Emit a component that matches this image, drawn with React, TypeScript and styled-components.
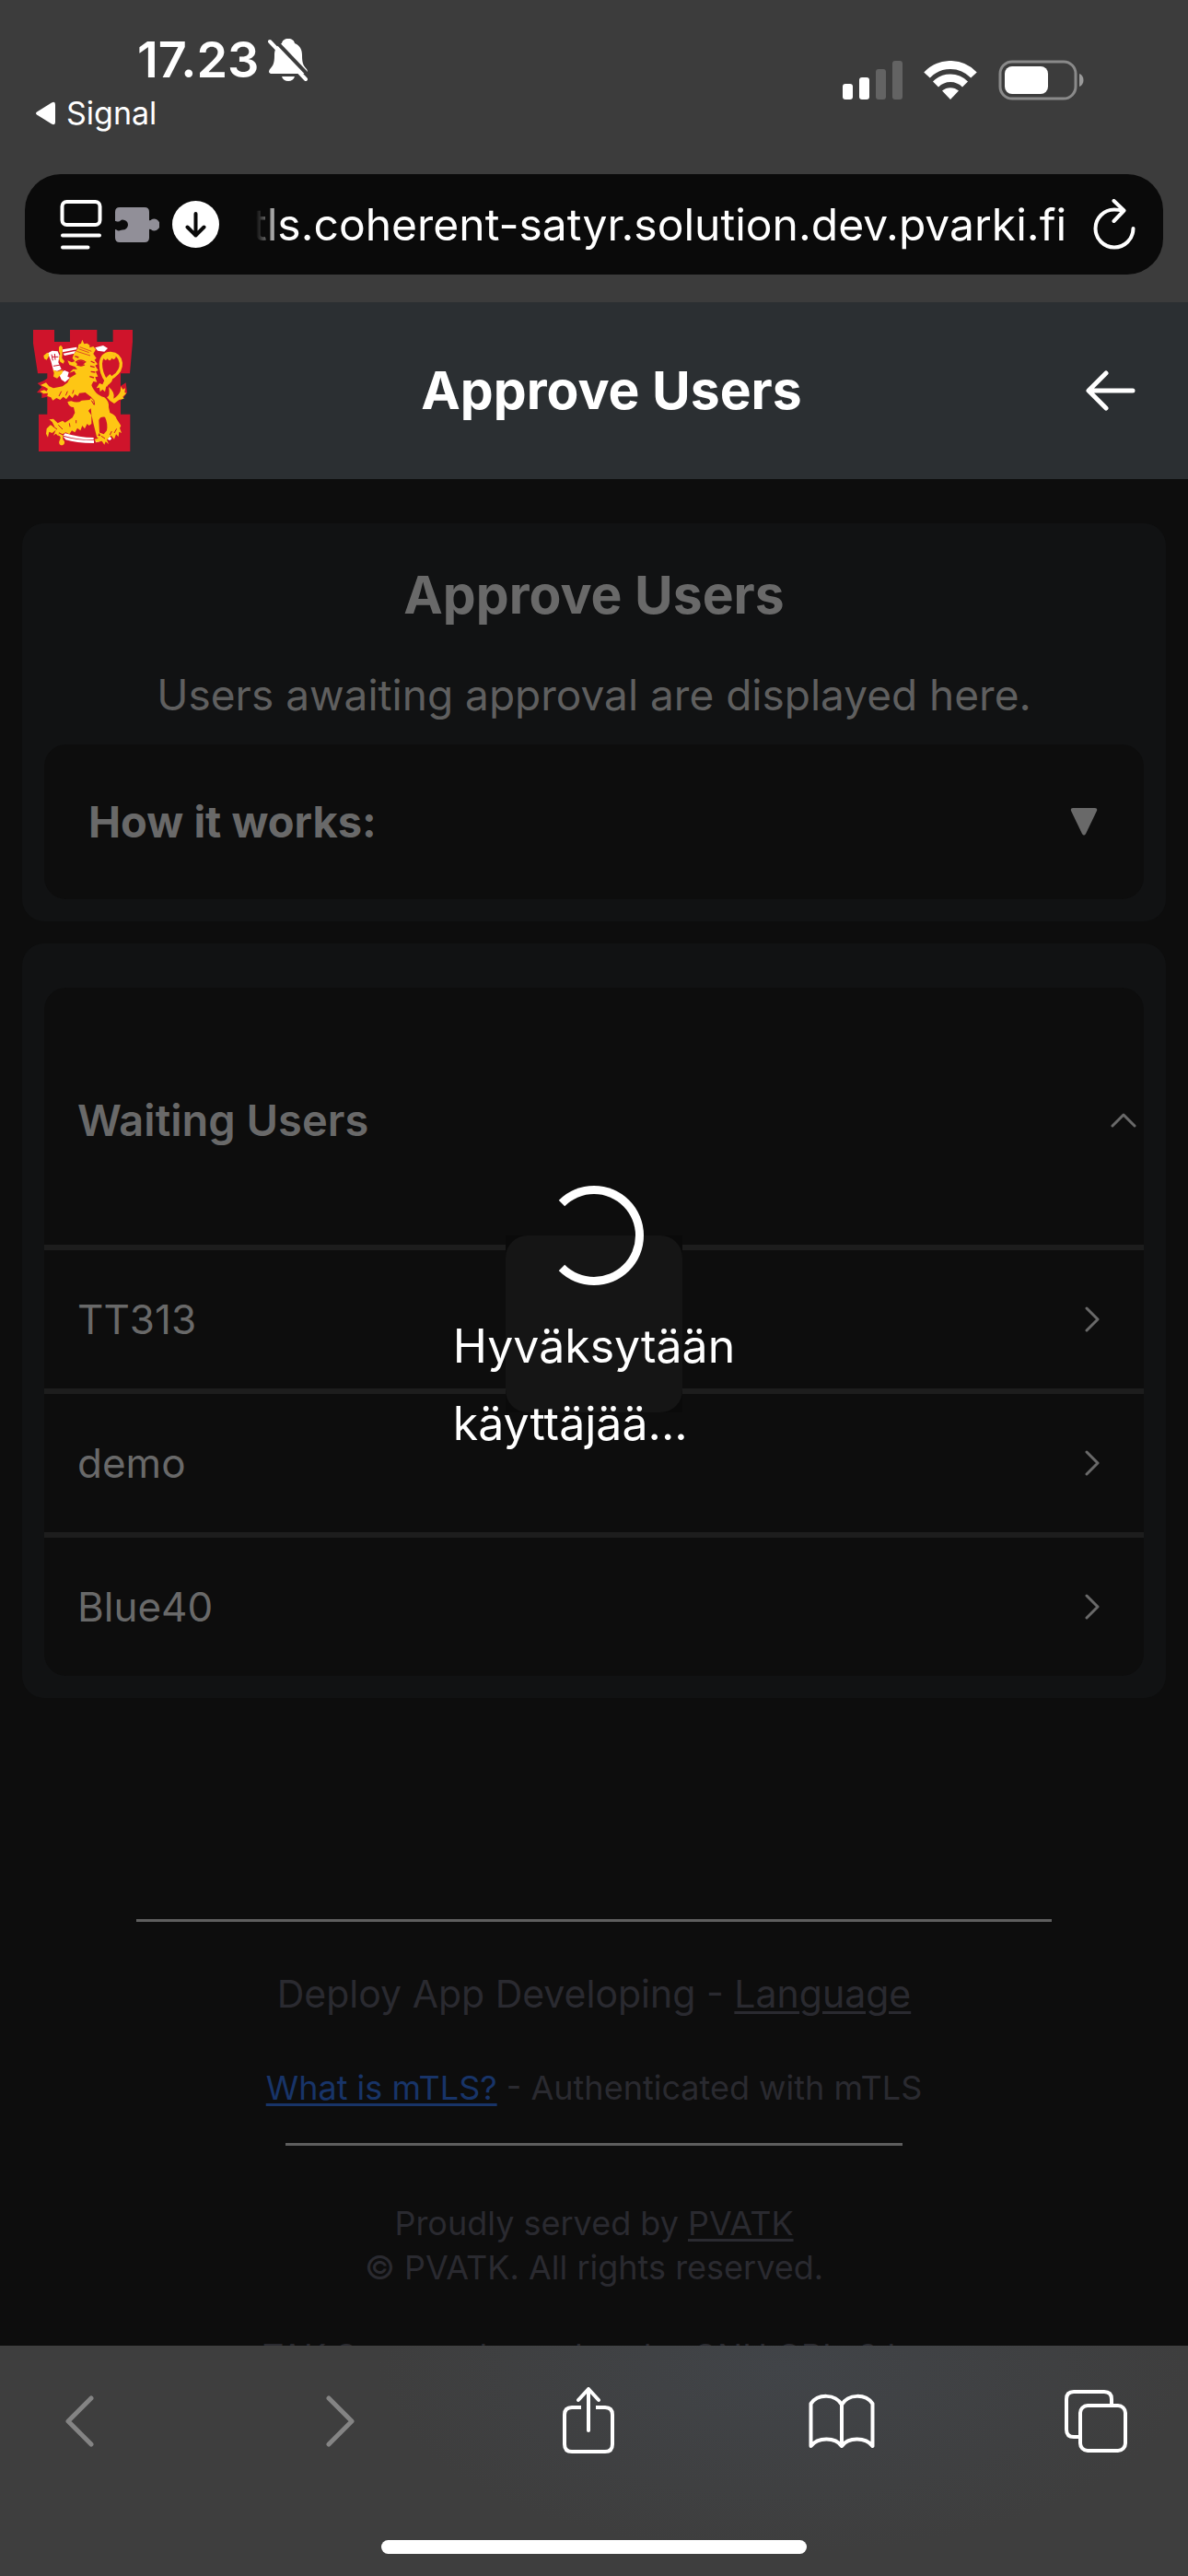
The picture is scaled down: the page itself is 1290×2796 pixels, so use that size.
import React from "react";
import styled, { createGlobalStyle } from "styled-components";

const GlobalStyle = createGlobalStyle`
  *, *::before, *::after { box-sizing: border-box; }
  html, body { margin: 0; background: #0d0d0d; }
  body {
    font-family: Inter, "Liberation Sans", sans-serif;
    color: #696969;
    -webkit-font-smoothing: antialiased;
  }
  h1, h2, p { margin: 0; }
  button { font: inherit; color: inherit; background: none; border: 0; padding: 0; cursor: pointer; }
  svg { display: block; flex: none; }
`;

const Screen = styled.div`
  display: flex;
  flex-direction: column;
  height: 100vh;
  overflow: hidden;
`;

/* ---------- Browser chrome ---------- */

const Chrome = styled.header`
  flex: none;
  background: #3c3c3c;
  padding-bottom: 30px;
`;

const StatusBar = styled.div`
  display: flex;
  justify-content: space-between;
  align-items: flex-start;
  height: 189px;
  padding: 33px 112px 0 38px;
  color: #fff;
`;

const StatusLeft = styled.div`
  display: flex;
  flex-direction: column;
`;

const Clock = styled.div`
  display: flex;
  align-items: center;
  gap: 10px;
  padding-left: 111px;
  font-size: 54px;
  line-height: 64px;
  font-weight: 600;
`;

const BackToApp = styled.button`
  display: flex;
  align-items: center;
  gap: 12px;
  margin-top: 4px;
  font-size: 34px;
  line-height: 44px;
`;

const StatusRight = styled.div`
  display: flex;
  align-items: center;
  gap: 23px;
  margin-top: 32px;
`;

const AddressBar = styled.div`
  display: flex;
  align-items: center;
  height: 109px;
  margin: 0 27px;
  padding: 0 30px 0 38px;
  border-radius: 39px;
  background: #0a0a0a;
  color: #fff;
`;

const AddressTools = styled.div`
  display: flex;
  align-items: center;
  gap: 14px;
`;

const AddressInput = styled.input`
  flex: 1;
  min-width: 0;
  margin: 0 30px 0 36px;
  padding: 0;
  border: 0;
  outline: 0;
  background: none;
  color: #fff;
  font: inherit;
  font-size: 48px;
  line-height: 64px;
  text-align: right;
  mask-image: linear-gradient(to right, transparent 4px, #000 32px);
`;

const Toolbar = styled.nav`
  flex: none;
  height: 250px;
  padding: 40px 58px 24px 45px;
  display: flex;
  flex-direction: column;
  justify-content: space-between;
  background:
    radial-gradient(ellipse 440px 200px at 66% 10%, #414448 0%, rgba(65, 68, 72, 0) 100%),
    #3e3e3e;
`;

const ToolbarButtons = styled.div`
  display: flex;
  justify-content: space-between;
  width: 100%;
`;

const ToolButton = styled.button<{ $muted?: boolean }>`
  display: flex;
  align-items: center;
  justify-content: center;
  width: 84px;
  height: 84px;
  color: ${(p) => (p.$muted ? "#848484" : "#fff")};
`;

const HomeIndicator = styled.div`
  width: 462px;
  height: 15px;
  margin-left: calc(50vw - 276px);
  border-radius: 8px;
  background: #fff;
`;

/* ---------- Page ---------- */

const Page = styled.div`
  position: relative;
  flex: 1;
  min-height: 0;
  overflow: hidden;
  background: #0d0d0d;
`;

const AppBar = styled.div`
  display: grid;
  grid-template-columns: 132px 1fr 94px;
  align-items: center;
  height: 192px;
  padding: 0 36px;
  background: #2b2f32;
  color: #fff;
`;

const Title = styled.h1`
  font-size: 57px;
  line-height: 72px;
  font-weight: 700;
  text-align: center;
`;

const BackButton = styled.button`
  justify-self: end;
  padding-right: 21px;
`;

const Content = styled.main`
  display: flex;
  flex-direction: column;
  gap: 24px;
  padding: 48px 24px 0;
`;

const Card = styled.section<{ $top: number }>`
  padding: ${(p) => p.$top}px 24px 24px;
  border-radius: 24px;
  background: #111213;
`;

const CardTitle = styled.h2`
  font-size: 57px;
  line-height: 72px;
  font-weight: 700;
  text-align: center;
`;

const CardText = styled.p`
  margin: 36px 0 18px;
  font-size: 46px;
  line-height: 72px;
  color: #5f5f5f;
  text-align: center;
`;

const Disclosure = styled.button`
  display: flex;
  align-items: center;
  justify-content: space-between;
  width: 100%;
  height: 168px;
  padding: 0 50px 0 48px;
  border-radius: 24px;
  background: #0d0d0d;
  font-size: 47px;
  line-height: 72px;
  font-weight: 700;
`;

const UserPanel = styled.div`
  border-radius: 24px;
  background: #0d0d0d;
`;

const PanelHeader = styled.button`
  display: flex;
  align-items: center;
  justify-content: space-between;
  width: 100%;
  height: 279px;
  padding: 8px 8px 0 36px;
  font-size: 47px;
  line-height: 72px;
  font-weight: 600;
`;

const UserList = styled.ul`
  margin: 0;
  padding: 0;
  list-style: none;
`;

const UserItem = styled.li`
  border-top: 6px solid #1d1d1d;
`;

const UserButton = styled.button`
  display: flex;
  align-items: center;
  justify-content: space-between;
  width: 100%;
  height: 150px;
  padding: 0 48px 0 36px;
  font-size: 44px;
  line-height: 72px;
`;

const Footer = styled.footer`
  display: flex;
  flex-direction: column;
  align-items: center;
  padding-top: 240px;
  color: #2a2a30;
  font-size: 36px;
  line-height: 48px;
  text-align: center;

  a {
    color: inherit;
    text-decoration-thickness: 3px;
    text-underline-offset: 4px;
  }
`;

const Rule = styled.hr<{ $width: string }>`
  width: ${(p) => p.$width};
  height: 3px;
  margin: 0;
  border: 0;
  background: #5e5e5e;
`;

const DeployLine = styled.p`
  padding: 46px 0;
  font-size: 41px;
  line-height: 64px;
`;

const FooterText = styled.p`
  padding-bottom: 36px;
`;

const Legal = styled.div`
  padding: 60px 0 48px;
`;

const InfoLink = styled.a`
  && { color: #183468; }
`;

/* ---------- Loading overlay ---------- */

const Overlay = styled.div`
  position: absolute;
  inset: 0;
  display: flex;
  align-items: center;
  justify-content: center;
`;

const LoaderCorners = styled.div`
  width: 192px;
  height: 192px;
  background: #0a0a0a;
`;

const LoaderBox = styled.div`
  display: flex;
  flex-direction: column;
  align-items: center;
  justify-content: center;
  gap: 24px;
  width: 192px;
  height: 192px;
  border-radius: 24px;
  background: #151515;
  color: #fff;
`;

const Spinner = styled.div`
  flex: none;
  width: 108px;
  height: 108px;
  border: 9px solid #fff;
  border-left-color: transparent;
  border-radius: 50%;
`;

const LoaderText = styled.p`
  flex: none;
  font-size: 50px;
  line-height: 84px;
  white-space: nowrap;
`;

/* ---------- Icons ---------- */

const BellOff = () => (
  <svg width="44" height="48" viewBox="0 0 44 48" fill="none">
    <path
      d="M22 1c-4 0-6.500 2-7 5C9 8.500 7 13 7 19c0 9-1.500 11-4.500 14.500C0 36.500 1 39 4 39h36c3 0 4-2.500 1.500-5.500C38.500 30 37 28 37 19c0-6-2-10.500-8-13-.500-3-3-5-7-5z"
      fill="#fff"
    />
    <path d="M15 42h14c-1 3.500-3.500 5-7 5s-6-1.500-7-5z" fill="#fff" />
    <path d="M5 0L46 43" stroke="#3c3c3c" strokeWidth="4" />
    <path d="M2 4L41 45" stroke="#fff" strokeWidth="4" strokeLinecap="round" />
  </svg>
);

const BackTriangle = () => (
  <svg width="22" height="26" viewBox="0 0 22 26">
    <path d="M2 11.500L18 1.500q4-2 4 2v19q0 4-4 2L2 14.500q-2-1.500 0-3z" fill="#fff" />
  </svg>
);

const SignalBars = () => (
  <svg width="65" height="42" viewBox="0 0 65 42">
    <rect x="0" y="25" width="11" height="17" rx="3" fill="#fff" />
    <rect x="18" y="18" width="11" height="24" rx="3" fill="#fff" />
    <rect x="36" y="9" width="11" height="33" rx="3" fill="#636363" />
    <rect x="54" y="0" width="11" height="42" rx="3" fill="#636363" />
  </svg>
);

const Wifi = () => (
  <svg width="58" height="42" viewBox="0 0 58 42" fill="none" stroke="#fff">
    <path d="M3.500 15.500C17.500 .800 40.500 .800 54.500 15.500" strokeWidth="9" />
    <path d="M13 25.500c9-9 23-9 32 0" strokeWidth="8.500" />
    <path d="M29 42l-9-9.500c5-4.500 13-4.500 18 0z" fill="#fff" stroke="none" />
  </svg>
);

const Battery = () => (
  <svg width="94" height="44" viewBox="0 0 94 44">
    <rect x="2" y="2" width="82" height="40" rx="13" fill="none" stroke="#8a8a8a" strokeWidth="3" />
    <rect x="7" y="7" width="47" height="30" rx="8" fill="#fff" />
    <path d="M88 15c6 2 6 12 0 14z" fill="#9a9a9a" />
  </svg>
);

const ReaderIcon = () => (
  <svg width="46" height="56" viewBox="0 0 46 56" fill="none" stroke="#fff" strokeWidth="4" strokeLinecap="round">
    <rect x="2.500" y="3" width="41" height="25" rx="5" />
    <path d="M3 39.500h40M3 52.500h27.500" />
  </svg>
);

const PuzzleIcon = () => (
  <svg width="48" height="40" viewBox="0 0 48 40">
    <path
      d="M5 1h27q5 0 5 5v9c2 1 2-1.500 5.500-1.500a6 6.500 0 010 13C39 26.500 39 24 37 25v9q0 5-5 5H5q-5 0-5-5v-9c2 0 2 1.500 4 1.500 1.500 0 2-1 4-1a6 5.500 0 000-11c-2 0-2.500 2-4.500 2S1 16 0 16V6q0-5 5-5z"
      fill="#918f98"
    />
  </svg>
);

const DownloadIcon = () => (
  <svg width="51" height="51" viewBox="0 0 51 51" fill="none">
    <circle cx="25.500" cy="25.500" r="25.500" fill="#fff" />
    <path d="M25.500 14v23M16.500 28.500l9 9 9-9" stroke="#0a0a0a" strokeWidth="4" strokeLinecap="round" strokeLinejoin="round" />
  </svg>
);

const ReloadIcon = () => (
  <svg width="46" height="56" viewBox="0 0 46 56" fill="none" stroke="#fff" strokeWidth="4" strokeLinecap="round" strokeLinejoin="round">
    <path d="M43.500 32a20.500 20.500 0 11-20.500-20.500c4 0 7 .500 9 1.500" />
    <path d="M22.500 2l11 10.500L22.500 24" />
  </svg>
);

const ArrowLeft = () => (
  <svg width="54" height="44" viewBox="0 0 54 44" fill="none" stroke="#fff" strokeWidth="5" strokeLinecap="round" strokeLinejoin="round">
    <path d="M51 22H4M22 3L3 22l19 19" />
  </svg>
);

const TriangleDown = () => (
  <svg width="30" height="30" viewBox="0 0 30 30">
    <path d="M3 0h24q3 0 2 3L17 28q-2 3-4 0L1 3q-1-3 2-3z" fill="#696969" />
  </svg>
);

const ChevronUp = () => (
  <svg width="28" height="16" viewBox="0 0 28 16" fill="none" stroke="#696969" strokeWidth="3" strokeLinecap="round" strokeLinejoin="round">
    <path d="M2 14L14 2l12 12" />
  </svg>
);

const ChevronRight = () => (
  <svg width="16" height="28" viewBox="0 0 16 28" fill="none" stroke="#696969" strokeWidth="3" strokeLinecap="round" strokeLinejoin="round">
    <path d="M2 2l12 12L2 26" />
  </svg>
);

const NavChevron = ({ forward }: { forward?: boolean }) => (
  <svg width="50" height="56" viewBox="0 0 50 56" fill="none" stroke="currentColor" strokeWidth="5" strokeLinecap="round" strokeLinejoin="round">
    <path d={forward ? "M19 3l25 25L19 53" : "M37 3L12 28l25 25"} />
  </svg>
);

const ShareIcon = () => (
  <svg width="58" height="74" viewBox="0 0 58 74" fill="none" stroke="currentColor" strokeWidth="4" strokeLinecap="round" strokeLinejoin="round">
    <path d="M21 22H11q-8 0-8 8v32q0 8 8 8h36q8 0 8-8V30q0-8-8-8H37" strokeLinecap="butt" />
    <path d="M29 47V3M18 14L29 2l11 12" />
  </svg>
);

const BookIcon = () => (
  <svg width="72" height="60" viewBox="0 0 72 60" fill="none" stroke="currentColor" strokeWidth="4" strokeLinecap="round" strokeLinejoin="round">
    <path d="M36 57V12M36 12C29 0 10 0 2.500 11v46C10 47 29 47 36 57 43 47 62 47 69.500 57V11C62 0 43 0 36 12z" />
  </svg>
);

const TabsIcon = () => (
  <svg width="68" height="68" viewBox="0 0 68 68" fill="none" stroke="currentColor" strokeWidth="4">
    <path d="M51 17V10q0-8-8-8H10q-8 0-8 8v33q0 8 8 8h7" />
    <rect x="17" y="17" width="49" height="49" rx="8" />
  </svg>
);

const YELLOW = "#fec614";
const RED = "#cf142b";

const Crest = () => (
  <svg width="110" height="136" viewBox="0 0 330 408" role="img" aria-label="Finnish Defence Forces">
    <path d="M0 6H69V45H120V6H208V45H260V6H324V45L315 148H285V281H316V402H18V281H46V148H15L0 50Z" fill={RED} />
    {/* red edging that lets paws stand out past the tower */}
    <path d="M52 160L34 172 14 180 28 192 12 210 28 212 28 228 46 224 60 240 150 220V165ZM284 190L302 178 306 210 292 230 280 240Z" fill={RED} />
    {/* scabbard and raised sword */}
    <g fill="#fff">
      <path d="M96 70L142 62V70L96 79ZM98 83L138 75 134 83 102 90Z" />
      <path d="M202 64L228 57 243 66 232 77 210 74Z" />
      <path d="M48 82L62 74 80 76 86 90 82 112 92 134 78 140 66 138 58 108Z" />
      <path d="M84 150L102 138 116 144 112 158 120 162 104 176 92 168Z" />
      <path d="M104 343Q150 357 197 357V364Q144 364 98 350ZM98 353Q150 367 198 366V375Q138 375 106 364Z" />
      <path d="M203 366L216 358 220 368 204 373ZM242 362L248 352 256 360 250 366Z" />
    </g>
    <path d="M62 94h20M60 86l4 20M70 84l2 20M66 124l24-4" stroke={RED} strokeWidth="3" fill="none" />
    <g fill={YELLOW}>
      {/* hilt and elbow guard */}
      <path d="M84 62L90 56 96 64 94 98 102 108 98 116 88 110 84 100 88 84 84 76ZM34 90L46 80 52 84 50 94 44 104 36 100Z" />
      <path d="M64 136L78 142 92 138 98 136 94 148 84 158 78 164 66 158 68 146Z" />
      {/* crown, head, mane and trunk */}
      <path d="M132 86L146 66 148 54 156 50 160 38 166 52 176 50 184 56 184 64 196 60 204 70 196 84 206 98 200 104 210 118 202 122 212 138 204 142 211 158 202 160 208 176 196 174 190 186C198 206 210 220 232 226Q248 238 246 258L250 276Q268 282 272 296L286 318 282 326 288 342 280 338 278 354 270 346 264 362 254 350 240 364 246 378 236 370 232 380 224 368 206 372 200 362 212 360 206 350 220 352 214 340 230 346 240 334Q244 310 234 290 218 288 214 300L216 340 208 358 196 310 190 282 188 262Q184 264 180 270L190 284 190 312 182 318 176 312 168 328 160 318 154 334 144 326 136 340 126 334 118 346 106 340 96 346 84 340 82 352 74 344 66 350 74 332 62 342 52 338 48 356 42 344 44 328 56 316 70 322 62 306 52 298 66 296 80 310 96 302 104 308 116 300 128 292 136 276 132 258Q116 258 112 240L124 238Q146 246 158 236L184 234 190 226 170 210 150 212 146 222 136 216 128 228 118 218 108 232 98 224 88 234 76 228 64 236 58 226 46 222 48 212 34 214 22 206 36 202 44 206 48 198 38 192 24 186 42 178 52 190 66 196 96 190 112 178 120 162 140 150 134 140 118 146 130 134 144 134 136 126 118 120 112 106 126 112 136 108 128 98Z" />
      {/* foot tip below the sabre */}
      <path d="M82 342L98 350Q94 364 102 368 104 382 90 382 80 376 88 362 92 352 82 350Z" />
      {/* tail tuft */}
      <path d="M250 150Q262 160 256 174 246 186 238 190L234 208 226 200 218 208 216 194 206 196 216 180 226 184 234 166Z" />
      <path d="M246 192Q268 210 262 230 278 220 284 206L286 190 292 200 300 196 298 210 304 212 292 224 296 230 280 234 264 246Q250 240 240 226 252 222 246 192Z" />
    </g>
    <path d="M238 172Q220 146 220 116 222 84 252 82 282 84 286 114 288 140 262 158 242 170 236 190" fill="none" stroke={YELLOW} strokeWidth="10" />
    <path d="M228 94Q234 112 242 100 250 112 256 98 266 108 270 92L250 82Z" fill={YELLOW} />
    {/* facial, mane and fur lines */}
    <g fill="none" stroke={RED} strokeWidth="4">
      <path d="M148 68L182 80M152 62L190 76M142 76L186 90" strokeWidth="2" />
      <path d="M138 112Q156 98 172 112M142 120Q156 126 168 120M136 92l12 4" />
      <path d="M188 108l12 6M186 124l14 4M188 142l14 2M184 158l14 4" />
      <path d="M186 224Q202 234 200 250M190 236l8 14" strokeWidth="3" />
      <path d="M84 222l8-16M106 220l6-14M128 214l4-12M96 330l-14-14M120 322l-2-12M140 310l0-10M62 318l16 12" strokeWidth="3" />
      <path d="M272 328l-8 14M256 336l-6 12M222 352l12 8" strokeWidth="3" />
    </g>
    <path d="M140 112Q156 102 170 112L160 124 146 122Z" fill={RED} />
  </svg>
);

const users = ["TT313", "demo", "Blue40"];

export default function App() {
  return (
    <Screen>
      <GlobalStyle />
      <Chrome>
        <StatusBar>
          <StatusLeft>
            <Clock>
              17.23
              <BellOff />
            </Clock>
            <BackToApp type="button">
              <BackTriangle />
              Signal
            </BackToApp>
          </StatusLeft>
          <StatusRight>
            <SignalBars />
            <Wifi />
            <Battery />
          </StatusRight>
        </StatusBar>
        <AddressBar>
          <AddressTools>
            <ReaderIcon />
            <PuzzleIcon />
            <DownloadIcon />
          </AddressTools>
          <AddressInput aria-label="Address" defaultValue="tls.coherent-satyr.solution.dev.pvarki.fi" />
          <button type="button" aria-label="Reload">
            <ReloadIcon />
          </button>
        </AddressBar>
      </Chrome>

      <Page>
        <AppBar>
          <Crest />
          <Title>Approve Users</Title>
          <BackButton type="button" aria-label="Back">
            <ArrowLeft />
          </BackButton>
        </AppBar>

        <Content>
          <Card $top={42}>
            <CardTitle>Approve Users</CardTitle>
            <CardText>Users awaiting approval are displayed here.</CardText>
            <Disclosure type="button" aria-expanded="false">
              How it works:
              <TriangleDown />
            </Disclosure>
          </Card>

          <Card $top={48}>
            <UserPanel>
              <PanelHeader type="button" aria-expanded="true">
                Waiting Users
                <ChevronUp />
              </PanelHeader>
              <UserList>
                {users.map((name) => (
                  <UserItem key={name}>
                    <UserButton type="button">
                      {name}
                      <ChevronRight />
                    </UserButton>
                  </UserItem>
                ))}
              </UserList>
            </UserPanel>
          </Card>
        </Content>

        <Footer>
          <Rule $width="77%" />
          <DeployLine>
            Deploy App Developing - <a href="#language">Language</a>
          </DeployLine>
          <FooterText>
            <InfoLink href="#mtls">What is mTLS?</InfoLink> - Authenticated with mTLS
          </FooterText>
          <Rule $width="52%" />
          <Legal>
            <p>
              Proudly served by <a href="#pvatk">PVATK</a>
            </p>
            <p>© PVATK. All rights reserved.</p>
          </Legal>
          <FooterText>TAK Server released under GNU GPLv3 by</FooterText>
        </Footer>

        <Overlay role="status">
          <LoaderCorners>
            <LoaderBox>
              <Spinner />
              <LoaderText>
                Hyväksytään
                <br />
                käyttäjää...
              </LoaderText>
            </LoaderBox>
          </LoaderCorners>
        </Overlay>
      </Page>

      <Toolbar aria-label="Browser">
        <ToolbarButtons>
          <ToolButton type="button" aria-label="Previous page" $muted>
            <NavChevron />
          </ToolButton>
          <ToolButton type="button" aria-label="Next page" $muted>
            <NavChevron forward />
          </ToolButton>
          <ToolButton type="button" aria-label="Share">
            <ShareIcon />
          </ToolButton>
          <ToolButton type="button" aria-label="Bookmarks">
            <BookIcon />
          </ToolButton>
          <ToolButton type="button" aria-label="Tabs">
            <TabsIcon />
          </ToolButton>
        </ToolbarButtons>
        <HomeIndicator />
      </Toolbar>
    </Screen>
  );
}
